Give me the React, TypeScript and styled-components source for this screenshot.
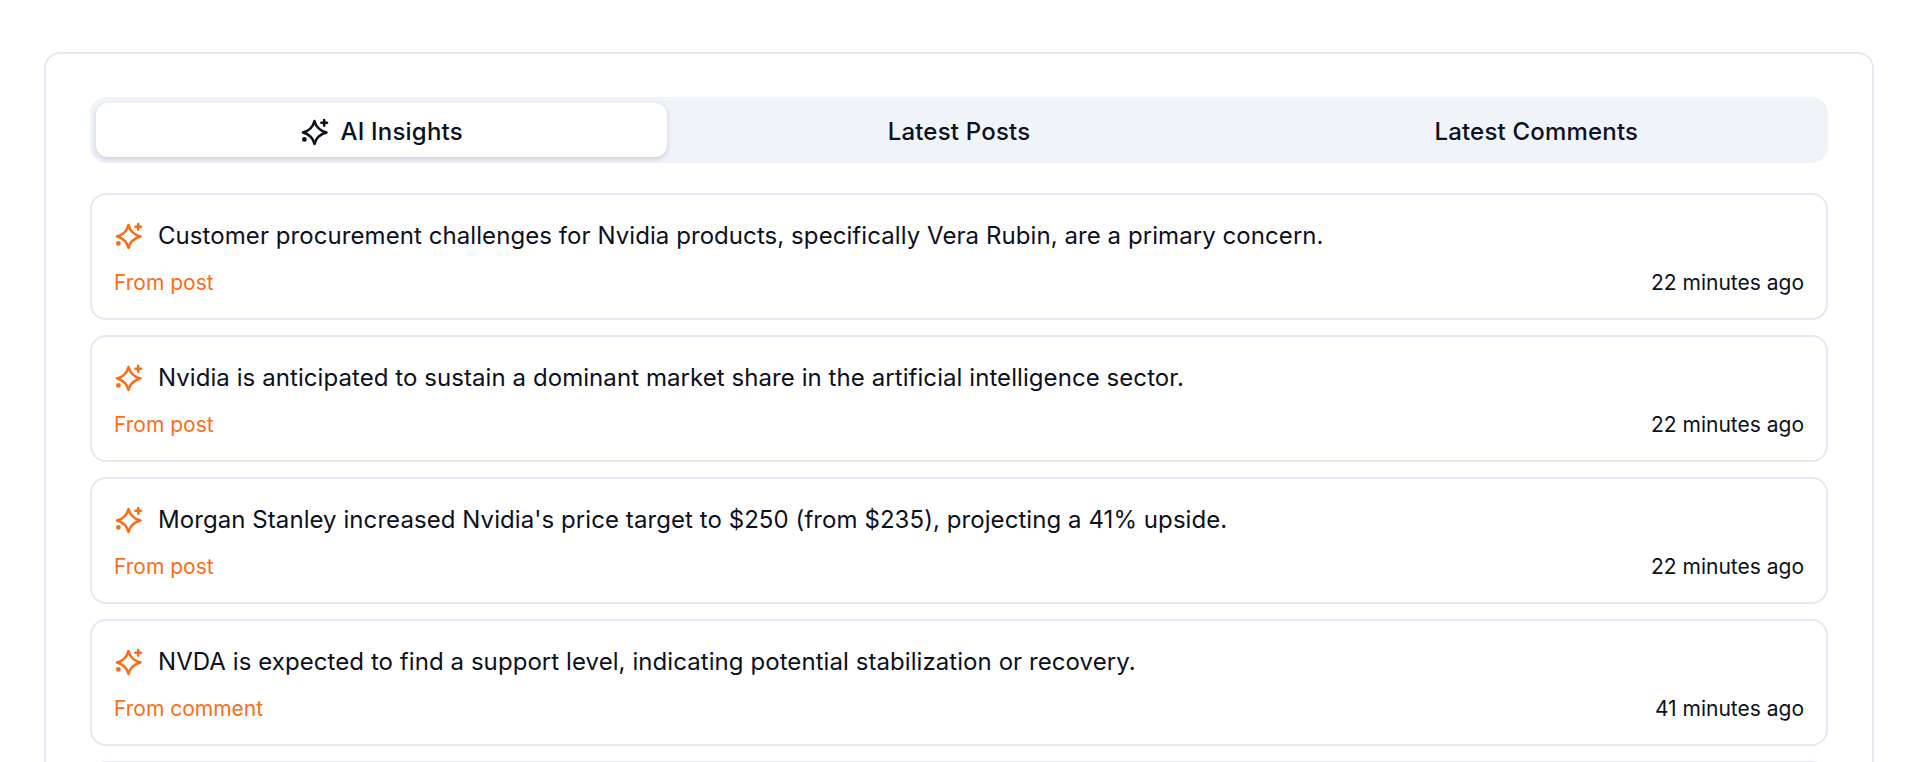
import React from "react";
import styled, { createGlobalStyle } from "styled-components";

const GlobalStyle = createGlobalStyle`
  html, body {
    margin: 0;
    height: 762px;
    overflow: hidden;
    background: #fff;
    font-family: "Inter", "Liberation Sans", sans-serif;
    color: #0c111d;
  }
`;

const Page = styled.div`
  padding: 52px 46px 0 44px;
`;

const Panel = styled.section`
  border: 2px solid #e3e8f3;
  border-radius: 16px;
  padding: 43px 44px 0;
  display: flex;
  flex-direction: column;
  gap: 30px;
`;

const Tabs = styled.div`
  display: grid;
  grid-template-columns: repeat(3, 1fr);
  gap: 6px;
  height: 66px;
  padding: 6px;
  box-sizing: border-box;
  border-radius: 16px;
  background: #f0f3f8;
`;

const Tab = styled.button<{ $active?: boolean }>`
  display: flex;
  align-items: center;
  justify-content: center;
  gap: 12px;
  padding: 3px 0 0;
  border: none;
  border-radius: 12px;
  font: 500 24px/1 "Inter", "Liberation Sans", sans-serif;
  letter-spacing: 0.2px;
  color: #0c111d;
  background: ${({ $active }) => ($active ? "#fff" : "transparent")};
  box-shadow: ${({ $active }) => ($active ? "0 2px 5px rgba(40, 55, 90, 0.2)" : "none")};
`;

const List = styled.div`
  display: flex;
  flex-direction: column;
  gap: 15px;
`;

const Card = styled.article`
  height: 127px;
  box-sizing: border-box;
  border: 2px solid #e3e8f3;
  border-radius: 16px;
  padding: 25px 23px 0;
`;

const Headline = styled.div`
  display: flex;
  align-items: center;
  gap: 15px;
  font-size: 24px;
  line-height: 32px;
  letter-spacing: 0.07px;
`;

const Meta = styled.div`
  display: flex;
  justify-content: space-between;
  margin: 17px -1px 0;
  font-size: 21px;
  line-height: 28px;
`;

const Source = styled.span`
  color: #fa6e18;
`;

const Sparkle = ({ size, color }: { size: number; color: string }) => (
  <svg width={size} height={size} viewBox="0 0 28 28" fill="none" stroke={color} strokeWidth="2.6" strokeLinejoin="round" strokeLinecap="round">
    <path d="M13.5 3Q15.8 12 25.5 14.5Q15.8 17 13.5 26Q11.2 17 2 14.5Q11.2 12 13.5 3Z" />
    <path d="M23.2 2V7.6M20.4 4.8H26" />
    <circle cx="3.4" cy="21.4" r="1.1" fill={color} />
  </svg>
);

const insights = [
  { text: "Customer procurement challenges for Nvidia products, specifically Vera Rubin, are a primary concern.", source: "From post", time: "22 minutes ago" },
  { text: "Nvidia is anticipated to sustain a dominant market share in the artificial intelligence sector.", source: "From post", time: "22 minutes ago" },
  { text: "Morgan Stanley increased Nvidia's price target to $250 (from $235), projecting a 41% upside.", source: "From post", time: "22 minutes ago" },
  { text: "NVDA is expected to find a support level, indicating potential stabilization or recovery.", source: "From comment", time: "41 minutes ago" },
  { text: "", source: "", time: "" },
];

export default function App() {
  return (
    <Page>
      <GlobalStyle />
      <Panel>
        <Tabs>
          <Tab $active>
            <Sparkle size={28} color="#0c111d" />
            AI Insights
          </Tab>
          <Tab>Latest Posts</Tab>
          <Tab>Latest Comments</Tab>
        </Tabs>
        <List>
          {insights.map((item, i) => (
            <Card key={i}>
              {item.text && (
                <>
                  <Headline>
                    <Sparkle size={28} color="#fa6e18" />
                    {item.text}
                  </Headline>
                  <Meta>
                    <Source>{item.source}</Source>
                    <span>{item.time}</span>
                  </Meta>
                </>
              )}
            </Card>
          ))}
        </List>
      </Panel>
    </Page>
  );
}
